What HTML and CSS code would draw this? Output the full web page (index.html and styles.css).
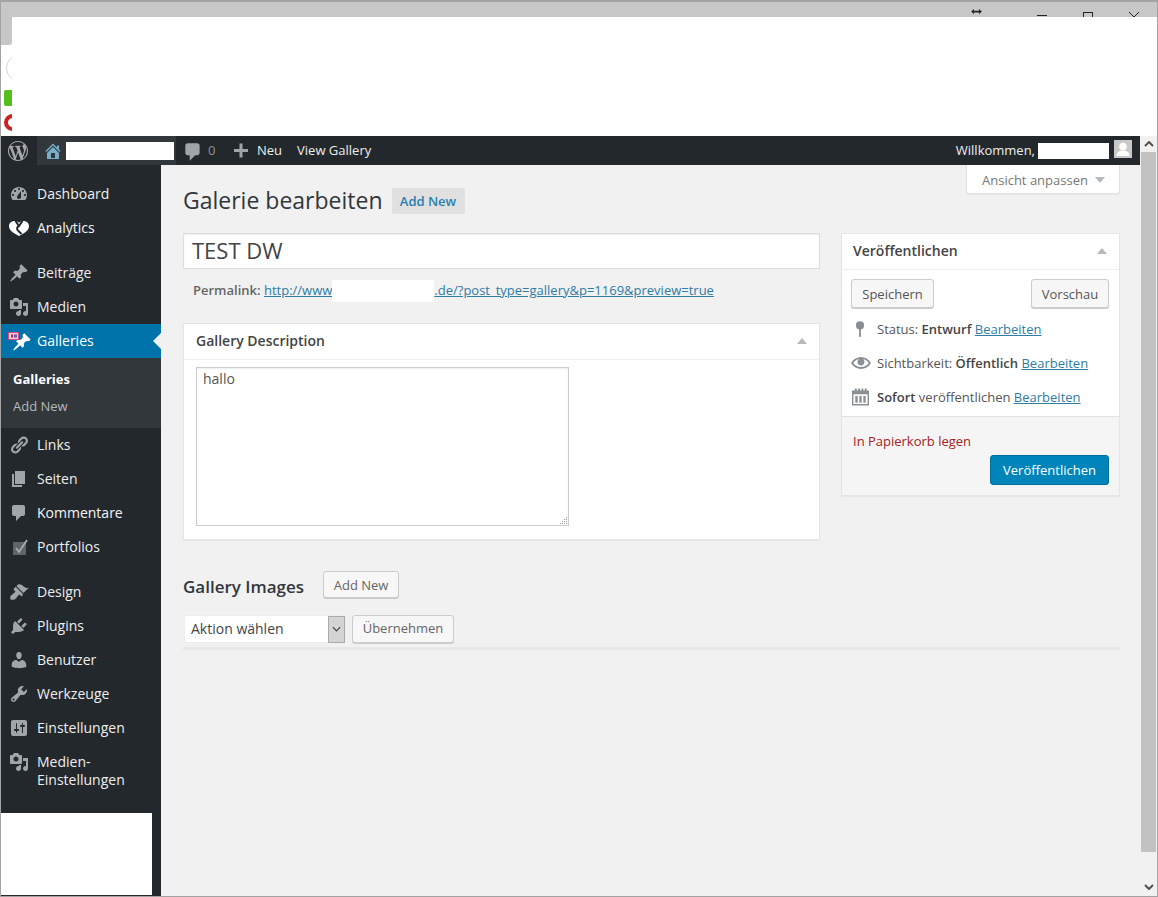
FILE: index.html
```html
<!DOCTYPE html>
<html lang="de">
<head>
<meta charset="utf-8">
<title>Galerie bearbeiten</title>
<link rel="stylesheet" href="styles.css">
</head>
<body>
<div class="window">
  <div class="titlebar">
    <svg class="ctl ctl-resize" viewBox="0 0 12 8"><path d="M0 4l3-3v2h6V1l3 3-3 3V5H3v2z"/></svg>
    <span class="ctl ctl-min"></span>
    <span class="ctl ctl-max"></span>
    <svg class="ctl ctl-close" viewBox="0 0 10 10"><path d="M0 0l10 10M10 0L0 10"/></svg>
  </div>
  <div class="toolbar">
    <div class="stub">
      <div class="stub-tab"></div>
      <div class="stub-circle"></div>
      <div class="stub-green"></div>
      <div class="stub-red"></div>
    </div>
    <div class="mask"></div>
  </div>
  <div class="workspace">
    <div class="page">
      <header class="adminbar">
        <svg class="ab-wp" viewBox="0 0 20 20"><path d="M20 10c0-5.51-4.49-10-10-10C4.48 0 0 4.49 0 10c0 5.52 4.48 10 10 10 5.51 0 10-4.48 10-10zM7.78 15.37L4.37 6.22c.55-.02 1.17-.08 1.17-.08.5-.06.44-1.13-.06-1.11 0 0-1.45.11-2.37.11-.18 0-.37 0-.58-.01C4.12 2.69 6.87 1.11 10 1.11c2.33 0 4.45.87 6.05 2.34-.68-.11-1.65.39-1.65 1.58 0 .74.45 1.36.9 2.1.35.61.55 1.36.55 2.46 0 1.49-1.4 5-1.4 5l-3.03-8.37c.54-.02.82-.17.82-.17.5-.05.44-1.25-.06-1.22 0 0-1.44.12-2.38.12-.87 0-2.33-.12-2.33-.12-.5-.03-.56 1.2-.06 1.22l.92.08 1.26 3.41zM17.41 10c.24-.64.74-1.87.43-4.25.7 1.29 1.05 2.71 1.05 4.25 0 3.29-1.73 6.24-4.4 7.78.97-2.59 1.94-5.2 2.92-7.78zM6.1 18.09C3.12 16.65 1.11 13.53 1.11 10c0-1.3.23-2.48.72-3.59C3.25 10.3 4.67 14.2 6.1 18.09zm4.03-6.63l2.58 6.98c-.86.29-1.76.45-2.71.45-.79 0-1.57-.11-2.29-.33.81-2.38 1.62-4.74 2.42-7.1z"/></svg>
        <div class="ab-site">
          <svg class="ab-home" viewBox="0 0 20 20"><path d="M16 8.5l1.53 1.53-1.06 1.06L10 4.62l-6.47 6.47-1.06-1.06L10 2.5l4 4v-2h2v4zm-6-2.46l6 5.99V18H4v-5.97zM12 17v-5H8v5h4z"/></svg>
          <span class="ab-redact"></span>
        </div>
        <svg class="ab-comment" viewBox="0 0 20 20"><path d="M5 2h9c1.1 0 2 .9 2 2v7c0 1.1-.9 2-2 2h-2l-5 5v-5H5c-1.1 0-2-.9-2-2V4c0-1.1.9-2 2-2z"/></svg>
        <span class="ab-count">0</span>
        <svg class="ab-plus" viewBox="0 0 20 20"><path d="M17 8v3h-5.500v5.500h-3V11H3V8h5.500V2.500h3V8z"/></svg>
        <span class="ab-text ab-new">Neu</span>
        <span class="ab-text ab-view">View Gallery</span>
        <div class="ab-right">
          <span class="ab-text">Willkommen,</span>
          <span class="ab-name"></span>
          <svg class="ab-avatar" viewBox="0 0 18 18"><rect width="18" height="18" fill="#c9c9c9"/><circle cx="9" cy="6.500" r="3.800" fill="#fff"/><path d="M2.500 16c0-4 3-5.500 6.500-5.500s6.500 1.500 6.500 5.500z" fill="#fff"/></svg>
        </div>
      </header>
      <div class="body">
        <nav class="sidebar">
          <ul class="menu">
            <li class="item"><svg class="ico" viewBox="0 0 20 20"><path d="M3.760 16h12.480c1.100-1.370 1.760-3.110 1.760-5 0-4.420-3.580-8-8-8s-8 3.580-8 8c0 1.890.66 3.630 1.760 5zM10 4c.55 0 1 .45 1 1s-.45 1-1 1-1-.45-1-1 .45-1 1-1zM6 6c.55 0 1 .45 1 1s-.45 1-1 1-1-.45-1-1 .45-1 1-1zm8 0c.55 0 1 .45 1 1s-.45 1-1 1-1-.45-1-1 .45-1 1-1zm-5.370 5.550L12 7v6c0 1.100-.9 2-2 2s-2-.9-2-2c0-.57.24-1.080.63-1.450zM4 10c.55 0 1 .45 1 1s-.45 1-1 1-1-.45-1-1 .45-1 1-1zm12 0c.55 0 1 .45 1 1s-.45 1-1 1-1-.45-1-1 .45-1 1-1z"/></svg>Dashboard</li>
            <li class="item item-white"><svg class="ico ico-analytics" viewBox="0 0 20 15"><path class="an-fill" d="M5.500 0C2.200 0 0 2.300 0 5.200c0 3 2.600 5.600 6 7.500 1.500.8 3 1.600 4 2.300 1-.7 2.500-1.500 4-2.300 3.400-1.900 6-4.500 6-7.500C20 2.300 17.800 0 14.500 0 12.700 0 11 .7 10 1.800 9 .7 7.300 0 5.500 0z"/><path class="an-cut" d="M6.500 0L10 5l3.500-5M10 5c-2.500 1-2.500 3.500-.5 5l3 3"/></svg>Analytics</li>
            <li class="sep"></li>
            <li class="item"><svg class="ico" viewBox="0 0 20 20"><path d="M10.440 3.020l1.820-1.820 6.360 6.350-1.830 1.820c-1.050-.68-2.480-.57-3.410.36l-.75.75c-.92.93-1.040 2.350-.35 3.410l-1.830 1.820-2.410-2.410-2.800 2.790c-.42.42-3.380 2.710-3.800 2.290s1.860-3.390 2.280-3.810l2.790-2.790L4.100 9.360l1.830-1.820c1.050.69 2.480.57 3.400-.36l.75-.75c.93-.92 1.050-2.350.36-3.410z"/></svg>Beiträge</li>
            <li class="item"><svg class="ico" viewBox="0 0 20 20"><path d="M13 11V4c0-.55-.45-1-1-1h-1.670L9 1H5L3.670 3H2c-.55 0-1 .45-1 1v7c0 .55.45 1 1 1h10c.55 0 1-.45 1-1zM7 4.500c1.380 0 2.500 1.120 2.500 2.500S8.380 9.500 7 9.500 4.500 8.380 4.500 7 5.620 4.500 7 4.500zM14 6h5v10.500c0 1.380-1.120 2.500-2.500 2.500S14 17.880 14 16.500s1.120-2.500 2.500-2.500c.17 0 .34.02.5.05V9h-3V6zm-4 8.050V13h2v3.500c0 1.380-1.120 2.500-2.500 2.500S7 17.880 7 16.500 8.120 14 9.500 14c.17 0 .34.02.5.05z"/></svg>Medien</li>
            <li class="item item-current">
              <svg class="ico ico-gal" viewBox="0 0 24 20"><path fill="#fff" d="M14.440 3.020l1.820-1.820 6.360 6.350-1.830 1.820c-1.050-.68-2.480-.57-3.410.36l-.75.75c-.92.93-1.040 2.350-.35 3.410l-1.830 1.820-2.410-2.410-2.800 2.790c-.42.42-3.380 2.710-3.800 2.290s1.860-3.390 2.280-3.810l2.790-2.790L8.100 9.360l1.830-1.820c1.050.69 2.480.57 3.400-.36l.75-.75c.93-.92 1.050-2.350.36-3.410z"/><rect x="0.500" y="0.500" width="10" height="7" fill="#f0c6dc" stroke="#d84c80"/><rect x="3" y="2.500" width="2" height="3" fill="#b8244f"/><rect x="6" y="2.500" width="3" height="3" fill="#5a5fb0"/></svg>
              Galleries
              <span class="notch"></span>
            </li>
            <li class="submenu">
              <span class="sub sub-on">Galleries</span>
              <span class="sub">Add New</span>
            </li>
            <li class="item"><svg class="ico" viewBox="0 0 20 20"><path d="M17.740 2.760c1.680 1.690 1.680 4.410 0 6.100l-1.530 1.520c-1.120 1.120-2.700 1.470-4.140 1.090l2.620-2.610.76-.77.76-.76c.84-.84.84-2.200 0-3.040-.84-.85-2.200-.85-3.040 0l-.77.76-3.380 3.380c-.37-1.440-.02-3.020 1.100-4.140l1.520-1.530c1.690-1.680 4.420-1.680 6.100 0zM8.590 13.430l5.340-5.340c.42-.42.42-1.100 0-1.520-.44-.43-1.130-.39-1.530 0l-5.330 5.340c-.42.42-.42 1.100 0 1.520.44.43 1.130.39 1.520 0zm-.76 2.290l4.140-4.150c.38 1.440.03 3.020-1.090 4.140l-1.520 1.530c-1.690 1.680-4.410 1.680-6.100 0-1.680-1.680-1.680-4.420 0-6.100l1.530-1.520c1.120-1.120 2.700-1.470 4.140-1.100l-4.140 4.150c-.85.84-.85 2.200 0 3.050.84.84 2.200.84 3.040 0z"/></svg>Links</li>
            <li class="item"><svg class="ico" viewBox="0 0 20 20"><path d="M6 15V2h10v13H6zm-1 1h8v2H3V5h2v11z"/></svg>Seiten</li>
            <li class="item item-white"><svg class="ico" viewBox="0 0 20 20"><path d="M5 2h9c1.100 0 2 .9 2 2v7c0 1.100-.9 2-2 2h-2l-5 5v-5H5c-1.100 0-2-.9-2-2V4c0-1.100.9-2 2-2z"/></svg>Kommentare</li>
            <li class="item"><svg class="ico ico-folio" viewBox="0 0 20 20"><rect class="folio-box" x="3" y="5" width="13" height="13"/><path class="folio-check" d="M6 11l3 4 8-12"/></svg>Portfolios</li>
            <li class="sep"></li>
            <li class="item"><svg class="ico" viewBox="0 0 20 20"><path d="M14.480 11.060L7.410 3.990l1.500-1.500c.5-.56 2.300-.47 3.510.32 1.210.8 1.430 1.280 2.910 2.100 1.180.64 2.450 1.260 4.450.85zm-.71.71L6.700 4.700 4.930 6.470c-.39.39-.39 1.020 0 1.410l1.060 1.060c.39.39.39 1.030 0 1.420-.6.6-1.430 1.110-2.210 1.690-.35.26-.7.53-1.010.84C1.430 13.230.78 15.200 1.500 17.500c2.300.72 4.270.07 5.610-1.270.31-.31.58-.66.84-1.010.58-.78 1.090-1.610 1.690-2.210.39-.39 1.020-.39 1.410 0l1.060 1.060c.39.39 1.020.39 1.410 0z"/></svg>Design</li>
            <li class="item"><svg class="ico" viewBox="0 0 20 20"><path d="M13.110 4.360L9.870 7.600 8 5.730l3.240-3.240c.35-.34 1.050-.2 1.560.32.52.51.66 1.210.31 1.550zm-8 1.770l.91-1.120 9.010 9.010-1.190.84c-.71.71-2.630 1.160-3.820 1.160H6.140L4.900 17.260c-.59.59-1.540.59-2.120 0-.59-.58-.59-1.530 0-2.120l1.240-1.240v-3.880c0-1.130.4-3.190 1.090-3.890zm7.260 3.970l3.240-3.240c.34-.35 1.040-.21 1.550.31.52.51.66 1.210.31 1.550l-3.240 3.250z"/></svg>Plugins</li>
            <li class="item"><svg class="ico" viewBox="0 0 20 20"><path d="M10 9.250c-2.270 0-2.730-3.440-2.730-3.440C7 4.020 7.820 2 9.970 2c2.160 0 2.980 2.020 2.710 3.810 0 0-.41 3.440-2.680 3.440zm0 2.570L12.720 10c2.390 0 4.520 2.330 4.520 4.530v2.490s-3.650 1.130-7.240 1.130c-3.650 0-7.240-1.130-7.240-1.130v-2.490c0-2.250 1.940-4.480 4.470-4.480z"/></svg>Benutzer</li>
            <li class="item"><svg class="ico" viewBox="0 0 20 20"><path d="M16.680 9.770c-1.340 1.340-3.300 1.670-4.950.99l-5.410 6.520c-.99.99-2.590.99-3.580 0s-.99-2.590 0-3.570l6.520-5.420c-.68-1.650-.35-3.610.99-4.950 1.280-1.280 3.120-1.620 4.720-1.060l-2.890 2.890 2.820 2.820 2.860-2.870c.53 1.580.18 3.390-1.080 4.650zM3.810 16.210c.4.39 1.040.39 1.430 0 .4-.4.4-1.040 0-1.430-.39-.4-1.030-.4-1.430 0-.39.39-.39 1.030 0 1.430z"/></svg>Werkzeuge</li>
            <li class="item"><svg class="ico" viewBox="0 0 20 20"><path d="M18 16V4c0-1.100-.9-2-2-2H4c-1.100 0-2 .9-2 2v12c0 1.100.9 2 2 2h12c1.100 0 2-.9 2-2zM8 11h1c.55 0 1 .45 1 1s-.45 1-1 1H8v1.500c0 .28-.22.5-.5.5s-.5-.22-.5-.5V13H6c-.55 0-1-.45-1-1s.45-1 1-1h1V5.500c0-.28.22-.5.5-.5s.5.22.5.5V11zm5-2h-1c-.55 0-1-.45-1-1s.45-1 1-1h1V5.500c0-.28.22-.5.5-.5s.5.22.5.5V7h1c.55 0 1 .45 1 1s-.45 1-1 1h-1v5.500c0 .28-.22.5-.5.5s-.5-.22-.5-.5V9z"/></svg>Einstellungen</li>
            <li class="item item-tall"><svg class="ico" viewBox="0 0 20 20"><path d="M13 11V4c0-.55-.45-1-1-1h-1.670L9 1H5L3.670 3H2c-.55 0-1 .45-1 1v7c0 .55.45 1 1 1h10c.55 0 1-.45 1-1zM7 4.500c1.380 0 2.500 1.120 2.500 2.500S8.380 9.500 7 9.500 4.500 8.380 4.500 7 5.620 4.500 7 4.500zM14 6h5v10.500c0 1.380-1.120 2.500-2.500 2.500S14 17.880 14 16.500s1.120-2.500 2.500-2.500c.17 0 .34.02.5.05V9h-3V6zm-4 8.050V13h2v3.500c0 1.380-1.120 2.500-2.500 2.500S7 17.880 7 16.500 8.120 14 9.500 14c.17 0 .34.02.5.05z"/></svg><span>Medien-<br>Einstellungen</span></li>
          </ul>
          <div class="side-redact"></div>
        </nav>
        <main class="content">
          <div class="screen-tab">Ansicht anpassen<span class="tab-caret"></span></div>
          <div class="heading">
            <h1 class="title">Galerie bearbeiten</h1>
            <span class="add-chip">Add New</span>
          </div>
          <div class="columns">
            <div class="col-main">
              <div class="title-field">TEST DW</div>
              <div class="permalink"><b>Permalink:</b> <span class="link-wrap"><a class="link">http://www</a><span class="url-redact"></span><a class="link">.de/?post_type=gallery&amp;p=1169&amp;preview=true</a></span></div>
              <section class="box box-desc">
                <div class="box-head"><h2 class="box-title">Gallery Description</h2><span class="caret-up"></span></div>
                <div class="desc-body">
                  <div class="textarea">hallo
                    <svg class="grip" viewBox="0 0 9 9"><path d="M7 1h1v1H7zM5 3h1v1H5zM7 3h1v1H7zM3 5h1v1H3zM5 5h1v1H5zM7 5h1v1H7zM1 7h1v1H1zM3 7h1v1H3zM5 7h1v1H5zM7 7h1v1H7z"/></svg>
                  </div>
                </div>
              </section>
            </div>
            <aside class="col-side">
              <section class="box box-pub">
                <div class="box-head"><h2 class="box-title">Veröffentlichen</h2><span class="caret-up"></span></div>
                <div class="pub-actions">
                  <span class="btn btn-save">Speichern</span>
                  <span class="btn btn-preview">Vorschau</span>
                </div>
                <div class="pub-row">
                  <svg class="pub-ico" viewBox="0 0 20 20"><circle cx="10" cy="6" r="4.500"/><rect x="9" y="9" width="2" height="10" rx="1"/></svg>
                  <span>Status: <b>Entwurf</b> <a class="link">Bearbeiten</a></span>
                </div>
                <div class="pub-row">
                  <svg class="pub-ico pub-eye" viewBox="0 0 20 20"><path d="M19.700 9.400C17.700 6 14 3.900 10 3.900S2.300 6 .3 9.400L0 10l.3.6c2 3.400 5.700 5.500 9.700 5.500s7.700-2.100 9.700-5.500l.3-.6-.3-.6zM10 14.100c-3.100 0-6-1.600-7.700-4.100C3.600 8 5.700 6.600 8 6.100c-.9.6-1.500 1.700-1.500 2.900 0 1.900 1.600 3.500 3.500 3.500s3.500-1.600 3.500-3.500c0-1.200-.6-2.300-1.500-2.900 2.300.5 4.400 1.900 5.700 3.900-1.700 2.500-4.600 4.100-7.700 4.100z"/></svg>
                  <span>Sichtbarkeit: <b>Öffentlich</b> <a class="link">Bearbeiten</a></span>
                </div>
                <div class="pub-row">
                  <svg class="pub-ico pub-cal" viewBox="0 0 18 18"><path d="M3 0h2v2h1.500V0h2v2H10V0h2v2h1.500V0h2v2H18v16H0V2h3zM1.500 6v10.500h15V6z"/><path d="M3.500 8H6v7H3.500zM7.800 8h2.400v7H7.800zM12 8h2.500v7H12z"/></svg>
                  <span><b>Sofort</b> veröffentlichen <a class="link">Bearbeiten</a></span>
                </div>
                <div class="pub-foot">
                  <a class="trash">In Papierkorb legen</a>
                  <span class="btn-primary">Veröffentlichen</span>
                </div>
              </section>
            </aside>
          </div>
          <div class="images-head">
            <h2 class="images-title">Gallery Images</h2>
            <span class="btn btn-add">Add New</span>
          </div>
          <div class="bulk">
            <div class="select">Aktion wählen<span class="select-arrow"><svg viewBox="0 0 10 6"><path d="M1 1l4 4 4-4"/></svg></span></div>
            <span class="btn btn-apply">Übernehmen</span>
          </div>
          <div class="rule"></div>
        </main>
      </div>
    </div>
    <div class="scrollbar">
      <svg class="sb-arrow" viewBox="0 0 10 6"><path d="M1 5l4-4 4 4"/></svg>
      <div class="sb-thumb"></div>
      <svg class="sb-arrow" viewBox="0 0 10 6"><path d="M1 1l4 4 4-4"/></svg>
    </div>
  </div>
</div>
</body>
</html>
```
FILE: styles.css
```css
* { box-sizing: border-box; }
html, body { margin: 0; padding: 0; height: 897px; overflow: hidden; background: #fff; }
body { font-family: "Open Sans", "Noto Sans", sans-serif; font-size: 13px; color: #444; }
h1, h2, ul { margin: 0; padding: 0; }
ul { list-style: none; }

.window { height: 897px; display: flex; flex-direction: column; border: 1px solid #a3a3a3; border-top-width: 2px; }

.titlebar { height: 15px; flex: none; background: #c7c7c7; overflow: hidden; display: flex; justify-content: flex-end; align-items: flex-start; padding-right: 18px; }
.ctl { flex: none; }
.ctl-resize { width: 11px; height: 7px; margin: 6px 55px 0 0; fill: #222; }
.ctl-min { width: 10px; height: 1px; margin-top: 13px; margin-right: 36px; background: #222; }
.ctl-max { width: 10px; height: 10px; margin-top: 10px; margin-right: 36px; border: 1px solid #222; }
.ctl-close { width: 10px; height: 10px; margin-top: 10px; stroke: #222; stroke-width: 1; fill: none; }

.toolbar { height: 119px; flex: none; display: flex; }
.stub { width: 11px; flex: none; overflow: hidden; display: flex; flex-direction: column; }
.stub-tab { height: 28px; flex: none; background: #c7c7c7; border-radius: 0 0 3px 0; }
.stub-circle { width: 28px; height: 28px; margin: 9px 0 0 5px; flex: none; border: 1px solid #d8d8d8; border-radius: 50%; }
.stub-green { width: 14px; height: 16px; margin: 8px 0 0 3px; flex: none; background: #55c01c; border-radius: 2px; }
.stub-red { width: 17px; height: 17px; margin: 8px 0 0 3px; flex: none; background: #fff; border: 4px solid #cc2222; border-radius: 50%; }
.mask { flex: 1; background: #fff; }

.workspace { flex: 1; min-height: 0; display: flex; }
.page { flex: 1; min-width: 0; display: flex; flex-direction: column; }

.adminbar { height: 29px; flex: none; background: #23282d; display: flex; align-items: center; color: #eee; }
.ab-wp { width: 20px; height: 20px; margin-left: 7px; fill: #a7aaad; flex: none; }
.ab-site { height: 29px; margin-left: 9px; width: 139px; background: #32373c; display: flex; align-items: center; flex: none; }
.ab-home { width: 20px; height: 20px; margin-left: 6px; fill: #79aec8; flex: none; }
.ab-redact { width: 108px; height: 18px; margin-left: 3px; background: #fff; flex: none; }
.ab-comment { width: 22px; height: 22px; margin-left: 6px; margin-top: 2px; fill: #a0a5aa; flex: none; }
.ab-count { margin: 0 0 2px 4px; color: #8b9095; font-size: 13px; width: 9px; }
.ab-plus { width: 20px; height: 20px; margin-left: 14px; fill: #a0a5aa; flex: none; }
.ab-text { font-size: 13px; color: #eee; white-space: nowrap; margin-bottom: 2px; }
.ab-new { margin-left: 6px; }
.ab-view { margin-left: 15px; }
.ab-right { margin-left: auto; display: flex; align-items: center; padding-right: 8px; }
.ab-name { width: 71px; height: 16px; margin: 1px 0 0 3px; background: #fff; }
.ab-avatar { width: 18px; height: 18px; margin-left: 5px; margin-top: -3px; }

.body { flex: 1; min-height: 0; display: flex; }

.sidebar { width: 160px; flex: none; background: #23282d; padding-top: 12px; display: flex; flex-direction: column; }
.menu { flex: 1; }
.item { height: 34px; padding-left: 36px; display: flex; align-items: center; position: relative; font-size: 14px; color: #eee; line-height: 18px; white-space: nowrap; }
.item-white { color: #f5f5f5; }
.ico { position: absolute; left: 8px; top: 7px; width: 20px; height: 20px; fill: #a0a5aa; }
.ico-analytics { width: 20px; height: 15px; top: 10px; }
.an-fill { fill: #fff; }
.an-cut { fill: none; stroke: #23282d; stroke-width: 2; }
.ico-folio { left: 9px; width: 20px; height: 20px; }
.folio-box { fill: #5f6468; }
.folio-check { fill: none; stroke: #a9adb0; stroke-width: 1.800; }
.ico-gal { width: 24px; height: 20px; left: 7px; top: 8px; }
.sep { height: 11px; }
.item-current { background: #0073aa; color: #fff; }
.notch { position: absolute; right: 0; top: 9px; border: 8px solid transparent; border-right-color: #f1f1f1; border-left-width: 0; }
.submenu { height: 70px; background: #32373c; padding: 8px 0 0 12px; display: flex; flex-direction: column; }
.sub { height: 27px; line-height: 27px; font-size: 13px; color: #b4b9be; }
.sub-on { color: #fff; font-weight: 700; }
.item-tall { height: 50px; align-items: flex-start; padding-top: 8px; }
.side-redact { width: 151px; height: 82px; background: #fff; margin-bottom: 1px; flex: none; }

.content { flex: 1; min-width: 0; background: #f1f1f1; padding: 0 20px 0 22px; position: relative; display: flex; flex-direction: column; }
.screen-tab { position: absolute; top: 0; right: 20px; width: 154px; height: 29px; background: #fff; border: 1px solid #e1e1e1; border-top: 0; border-radius: 0 0 3px 3px; box-shadow: 0 1px 1px rgba(0,0,0,.04); font-size: 13px; color: #777; display: flex; align-items: center; padding: 2px 0 0 15px; }
.tab-caret { margin-left: 7px; border: 5px solid transparent; border-top: 6px solid #b4b9be; border-bottom: 0; }

.heading { height: 68px; padding-top: 21px; display: flex; align-items: flex-start; flex: none; }
.title { font-size: 23px; font-weight: 400; color: #32373c; line-height: 29px; }
.add-chip { margin: 2px 0 0 9px; height: 26px; width: 73px; background: #e0e0e0; color: #2a7fb0; font-weight: 600; font-size: 13px; display: flex; align-items: center; justify-content: center; border-radius: 2px; }

.columns { display: flex; gap: 21px; flex: none; height: 338px; }
.col-main { width: 637px; flex: none; }
.col-side { width: 279px; flex: none; }

.title-field { height: 36px; background: #fff; border: 1px solid #ddd; font-size: 22px; line-height: 32px; padding-left: 8px; color: #444; box-shadow: inset 0 1px 2px rgba(0,0,0,.07); }
.permalink { height: 54px; padding: 11px 0 0 10px; line-height: 20px; color: #666; font-size: 13px; }
.permalink b { font-weight: 600; }
.link-wrap { display: inline-flex; }
.link { color: #2f7ca6; text-decoration: underline; }
.url-redact { width: 102px; height: 22px; background: #fff; }

.box { background: #fff; border: 1px solid #e5e5e5; box-shadow: 0 1px 1px rgba(0,0,0,.04); }
.box-head { height: 36px; border-bottom: 1px solid #eee; display: flex; align-items: center; justify-content: space-between; padding: 0 12px 2px; }
.box-title { font-size: 14px; font-weight: 600; color: #444; line-height: 18px; }
.caret-up { border: 5px solid transparent; border-bottom: 6px solid #b4b9be; border-top: 0; margin-right: 0; }
.box-desc { height: 217px; }
.desc-body { padding: 7px 12px 0; }
.textarea { width: 373px; height: 159px; background: #fff; border: 1px solid #ccc; box-shadow: inset 0 1px 2px rgba(0,0,0,.07); padding: 1px 6px; font-size: 14px; line-height: 20px; color: #555; position: relative; }
.grip { position: absolute; right: 0; bottom: 0; width: 9px; height: 9px; fill: #999; }

.box-pub { height: 263px; display: flex; flex-direction: column; }
.box-pub .box-head { padding: 0 12px 2px 11px; }
.pub-actions { display: flex; justify-content: space-between; padding: 9px 10px 0 9px; margin-bottom: 4px; }
.btn { display: inline-flex; align-items: center; justify-content: center; height: 29px; background: #f7f7f7; border: 1px solid #ccc; border-radius: 3px; box-shadow: 0 1px 0 #ccc; font-size: 13px; color: #555; white-space: nowrap; }
.btn-save { width: 83px; }
.btn-preview { width: 78px; }
.pub-row { height: 34px; display: flex; align-items: center; padding-left: 35px; position: relative; font-size: 13px; color: #555; white-space: nowrap; }
.pub-row b { font-weight: 600; color: #444; }
.pub-ico { position: absolute; left: 9px; top: 8px; width: 18px; height: 18px; fill: #8a8f94; }
.pub-eye { width: 20px; height: 20px; top: 7px; }
.pub-cal { left: 10px; width: 17px; height: 18px; }
.pub-foot { flex: 1; margin-top: 2px; background: #f5f5f5; border-top: 1px solid #e2e2e2; padding: 15px 10px 0 11px; display: flex; flex-direction: column; }
.trash { color: #a82020; font-size: 13px; line-height: 18px; }
.btn-primary { align-self: flex-end; margin-top: 5px; width: 119px; height: 30px; background: #0085ba; border: 1px solid #006f9e; border-radius: 3px; color: #fff; font-size: 13px; display: flex; align-items: center; justify-content: center; }

.images-head { height: 44px; display: flex; align-items: flex-start; flex: none; }
.images-title { font-size: 17px; font-weight: 600; color: #32373c; line-height: 22px; margin-top: 5px; }
.btn-add { width: 76px; height: 27px; margin-left: 19px; color: #666; }
.bulk { height: 32px; display: flex; align-items: flex-start; flex: none; }
.select { width: 162px; height: 28px; background: #fff; margin-left: 1px; font-size: 14px; color: #444; display: flex; align-items: center; justify-content: space-between; padding-left: 6px; border: 1px solid #eee; line-height: 24px; }
.select-arrow { width: 17px; height: 27px; background: #d4d4d4; border: 1px solid #aaa; display: flex; align-items: center; justify-content: center; }
.select-arrow svg { width: 9px; height: 6px; stroke: #444; stroke-width: 1.300; fill: none; }
.btn-apply { width: 102px; height: 28px; margin-left: 6px; padding-bottom: 2px; color: #666; }
.rule { height: 3px; background: #e8e8e8; flex: none; }

.scrollbar { width: 17px; flex: none; background: #f1f1f1; display: flex; flex-direction: column; align-items: center; padding-top: 5px; padding-bottom: 6px; }
.sb-arrow { width: 10px; height: 6px; flex: none; stroke: #505050; stroke-width: 2; fill: none; }
.sb-thumb { width: 15px; height: 700px; background: #c2c2c2; margin: 5px 0 auto; }
```
